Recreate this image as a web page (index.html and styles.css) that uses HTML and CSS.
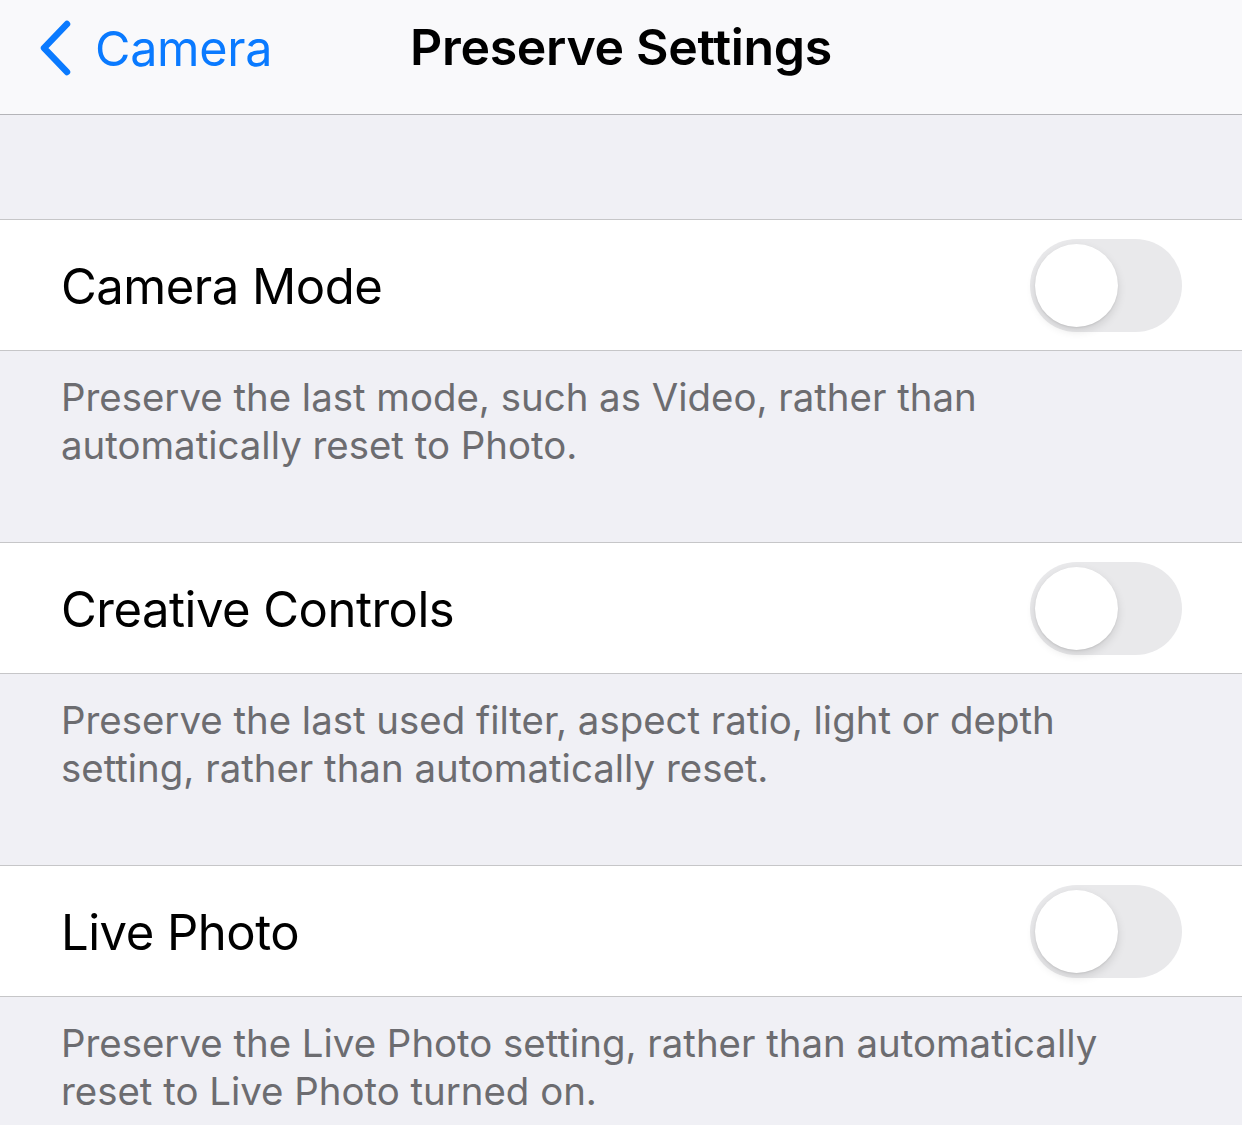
FILE: index.html
```html
<!DOCTYPE html>
<html>
<head>
<meta charset="utf-8">
<link rel="stylesheet" href="styles.css">
</head>
<body>
<div class="screen">
  <header class="navbar">
    <div class="back">
      <svg class="chev" width="36" height="58" viewBox="0 0 36 58"><path d="M31 5 L8 29 L31 53" fill="none" stroke="#0a7aff" stroke-width="6.5" stroke-linecap="round" stroke-linejoin="round"/></svg>
      <span class="back-label">Camera</span>
    </div>
    <div class="title">Preserve Settings</div>
  </header>
  <div class="gap"></div>
  <div class="row">
    <span class="label">Camera Mode</span>
    <span class="toggle"><span class="knob"></span></span>
  </div>
  <div class="footer">Preserve the last mode, such as Video, rather than automatically reset to Photo.</div>
  <div class="row">
    <span class="label">Creative Controls</span>
    <span class="toggle"><span class="knob"></span></span>
  </div>
  <div class="footer">Preserve the last used filter, aspect ratio, light or depth setting, rather than automatically reset.</div>
  <div class="row">
    <span class="label">Live Photo</span>
    <span class="toggle"><span class="knob"></span></span>
  </div>
  <div class="footer">Preserve the Live Photo setting, rather than automatically reset to Live Photo turned on.</div>
</div>
</body>
</html>
```
FILE: styles.css
```css
html, body {
  margin: 0;
  padding: 0;
  background: #f0f0f5;
}
.screen {
  width: 1242px;
  height: 1125px;
  overflow: hidden;
  font-family: Inter, "Noto Sans", sans-serif;
  background: #f0f0f5;
}
.navbar {
  position: relative;
  height: 114px;
  background: #f9f9fb;
  border-bottom: 1px solid #b4b4b8;
  display: flex;
  align-items: center;
}
.back {
  display: flex;
  align-items: center;
  padding-left: 36px;
  gap: 23px;
  margin-top: -18px;
}
.back-label {
  color: #0a7aff;
  font-size: 48.5px;
  letter-spacing: -0.3px;
}
.title {
  position: absolute;
  left: 0;
  right: 0;
  top: 17px;
  text-align: center;
  font-size: 50px;
  font-weight: 600;
  letter-spacing: -0.3px;
  color: #000;
}
.gap {
  height: 104px;
  border-bottom: 1px solid #c6c6c8;
}
.row {
  height: 130px;
  background: #fff;
  border-bottom: 1px solid #c6c6c8;
  display: flex;
  align-items: center;
  justify-content: space-between;
  padding: 0 60px 0 61px;
}
.label {
  font-size: 49px;
  color: #000;
  letter-spacing: -0.5px;
  margin-top: 2px;
}
.toggle {
  width: 152px;
  height: 93px;
  border-radius: 47px;
  background: #e9e9eb;
  position: relative;
  margin-top: 1px;
}
.knob {
  position: absolute;
  left: 5px;
  top: 5px;
  width: 83px;
  height: 83px;
  border-radius: 50%;
  background: #fff;
  box-shadow: 0 4px 10px rgba(0,0,0,0.12), 0 1px 2px rgba(0,0,0,0.08);
}
.footer {
  height: 192px;
  box-sizing: border-box;
  border-bottom: 1px solid #c6c6c8;
  padding: 22px 120px 0 61px;
  font-size: 38.4px;
  line-height: 48px;
  color: #6c6c70;
}
```
